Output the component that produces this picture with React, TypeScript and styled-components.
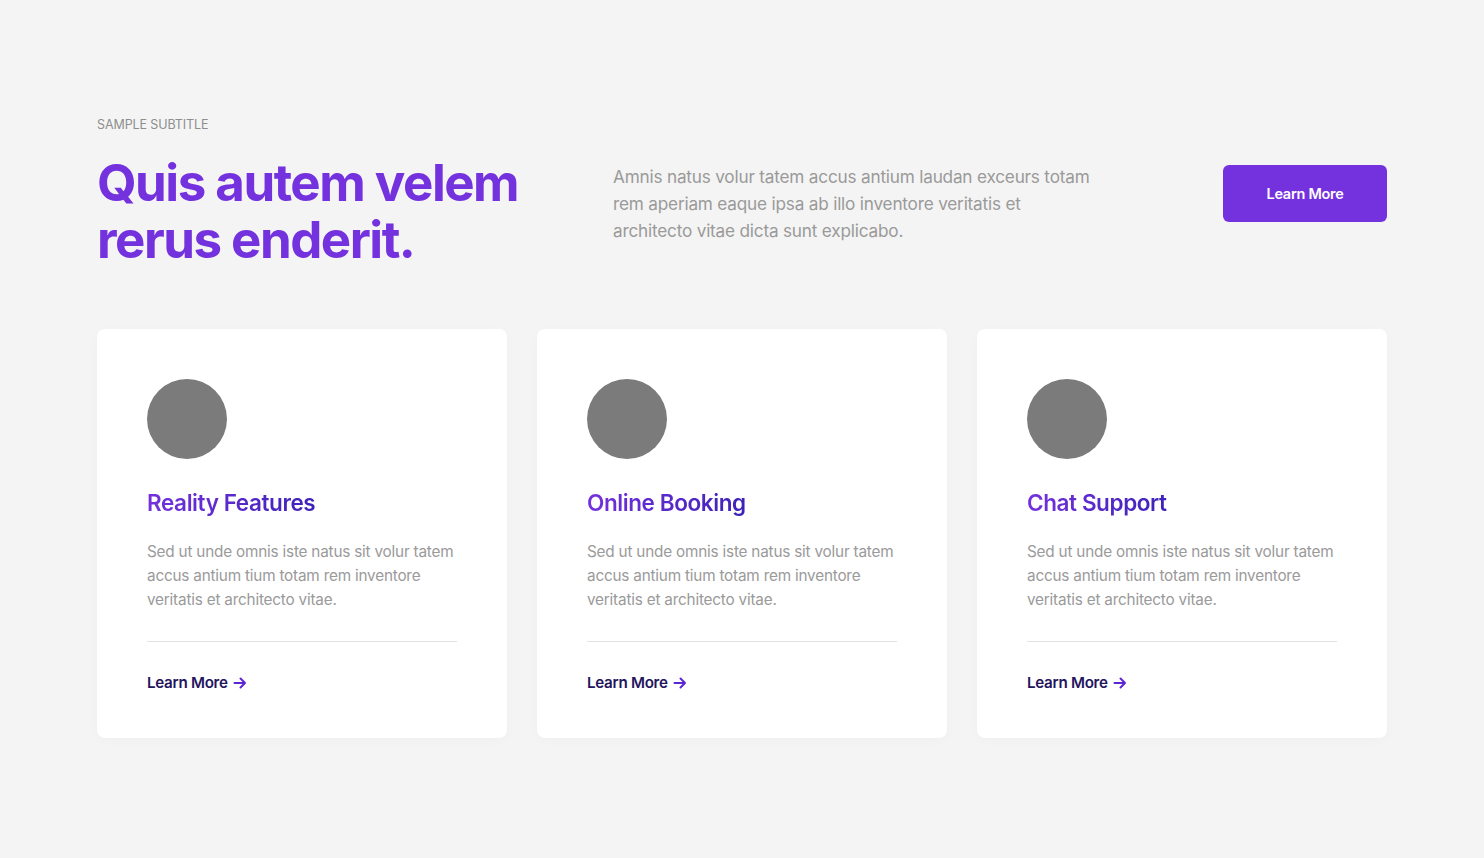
import React from "react";
import styled, { createGlobalStyle } from "styled-components";

const GlobalStyle = createGlobalStyle`
  * { box-sizing: border-box; }
  html, body { margin: 0; padding: 0; background: #f4f4f4; }
  body { font-family: "Inter", "Noto Sans", sans-serif; }
`;

const Page = styled.section`
  width: 1290px;
  margin: 0 auto;
  padding: 118px 0 120px;
`;

const Header = styled.div`
  display: flex;
  align-items: flex-start;
`;

const HeadingCol = styled.div`
  width: 516px;
`;

const Subtitle = styled.div`
  font-size: 12.5px;
  color: #8e8e8e;
  text-transform: uppercase;
  letter-spacing: -0.1px;
  line-height: 14px;
`;

const Heading = styled.h1`
  margin: 22px 0 0;
  font-size: 51px;
  line-height: 57px;
  font-weight: 700;
  letter-spacing: -1.5px;
  color: #7431de;
  white-space: nowrap;
`;

const Lead = styled.p`
  margin: 45px 0 0;
  width: 484px;
  font-size: 17.2px;
  line-height: 27px;
  color: #9a9a9a;
  letter-spacing: -0.2px;
`;

const Spacer = styled.div`
  flex: 1;
`;

const Button = styled.button`
  margin-top: 47px;
  width: 164px;
  height: 57px;
  border: none;
  border-radius: 6px;
  background: #7431de;
  color: #fff;
  font-family: inherit;
  font-weight: 600;
  font-size: 14.5px;
  letter-spacing: -0.3px;
  cursor: pointer;
`;

const Cards = styled.div`
  margin-top: 61px;
  display: grid;
  grid-template-columns: repeat(3, 410px);
  gap: 30px;
`;

const Card = styled.div`
  background: #fff;
  border-radius: 8px;
  padding: 50px 50px 46px;
  height: 409px;
  box-shadow: 0 2px 12px rgba(0, 0, 0, 0.025);
  display: flex;
  flex-direction: column;
`;

const Icon = styled.div`
  width: 80px;
  height: 80px;
  border-radius: 50%;
  background: #7b7b7b;
`;

const CardTitle = styled.h3`
  margin: 29px 0 0;
  font-size: 22.5px;
  line-height: 30px;
  font-weight: 600;
  letter-spacing: -0.4px;
  background: linear-gradient(90deg, #7431de 0%, #3d22b8 100%);
  -webkit-background-clip: text;
  background-clip: text;
  color: transparent;
  align-self: flex-start;
`;

const CardText = styled.p`
  margin: 22px 0 0;
  font-size: 15.3px;
  line-height: 24px;
  color: #9a9a9a;
  letter-spacing: -0.2px;
`;

const Divider = styled.hr`
  margin: 29px 0 0;
  border: none;
  border-top: 1px solid #e2e2e2;
`;

const LinkRow = styled.a`
  margin-top: 31px;
  display: inline-flex;
  align-items: center;
  gap: 5px;
  font-size: 15.2px;
  font-weight: 600;
  letter-spacing: -0.3px;
  color: #24145e;
  text-decoration: none;
  align-self: flex-start;
  cursor: pointer;
`;

const Arrow = () => (
  <svg width="14" height="14" viewBox="0 0 14 14" fill="none">
    <path d="M1.5 7h10.5M7.5 2.5 12 7l-4.5 4.5" stroke="#5a27d0" strokeWidth="2" strokeLinecap="round" strokeLinejoin="round" />
  </svg>
);

const cards = ["Reality Features", "Online Booking", "Chat Support"];

export default function App() {
  return (
    <>
      <GlobalStyle />
      <Page>
        <Header>
          <HeadingCol>
            <Subtitle>Sample Subtitle</Subtitle>
            <Heading>
              Quis autem velem
              <br />
              rerus enderit.
            </Heading>
          </HeadingCol>
          <Lead>
            Amnis natus volur tatem accus antium laudan exceurs totam rem aperiam eaque ipsa ab illo inventore veritatis et
            architecto vitae dicta sunt explicabo.
          </Lead>
          <Spacer />
          <Button>Learn More</Button>
        </Header>
        <Cards>
          {cards.map((t) => (
            <Card key={t}>
              <Icon />
              <CardTitle>{t}</CardTitle>
              <CardText>
                Sed ut unde omnis iste natus sit volur tatem accus antium tium totam rem inventore veritatis et architecto vitae.
              </CardText>
              <Divider />
              <LinkRow>
                Learn More <Arrow />
              </LinkRow>
            </Card>
          ))}
        </Cards>
      </Page>
    </>
  );
}
